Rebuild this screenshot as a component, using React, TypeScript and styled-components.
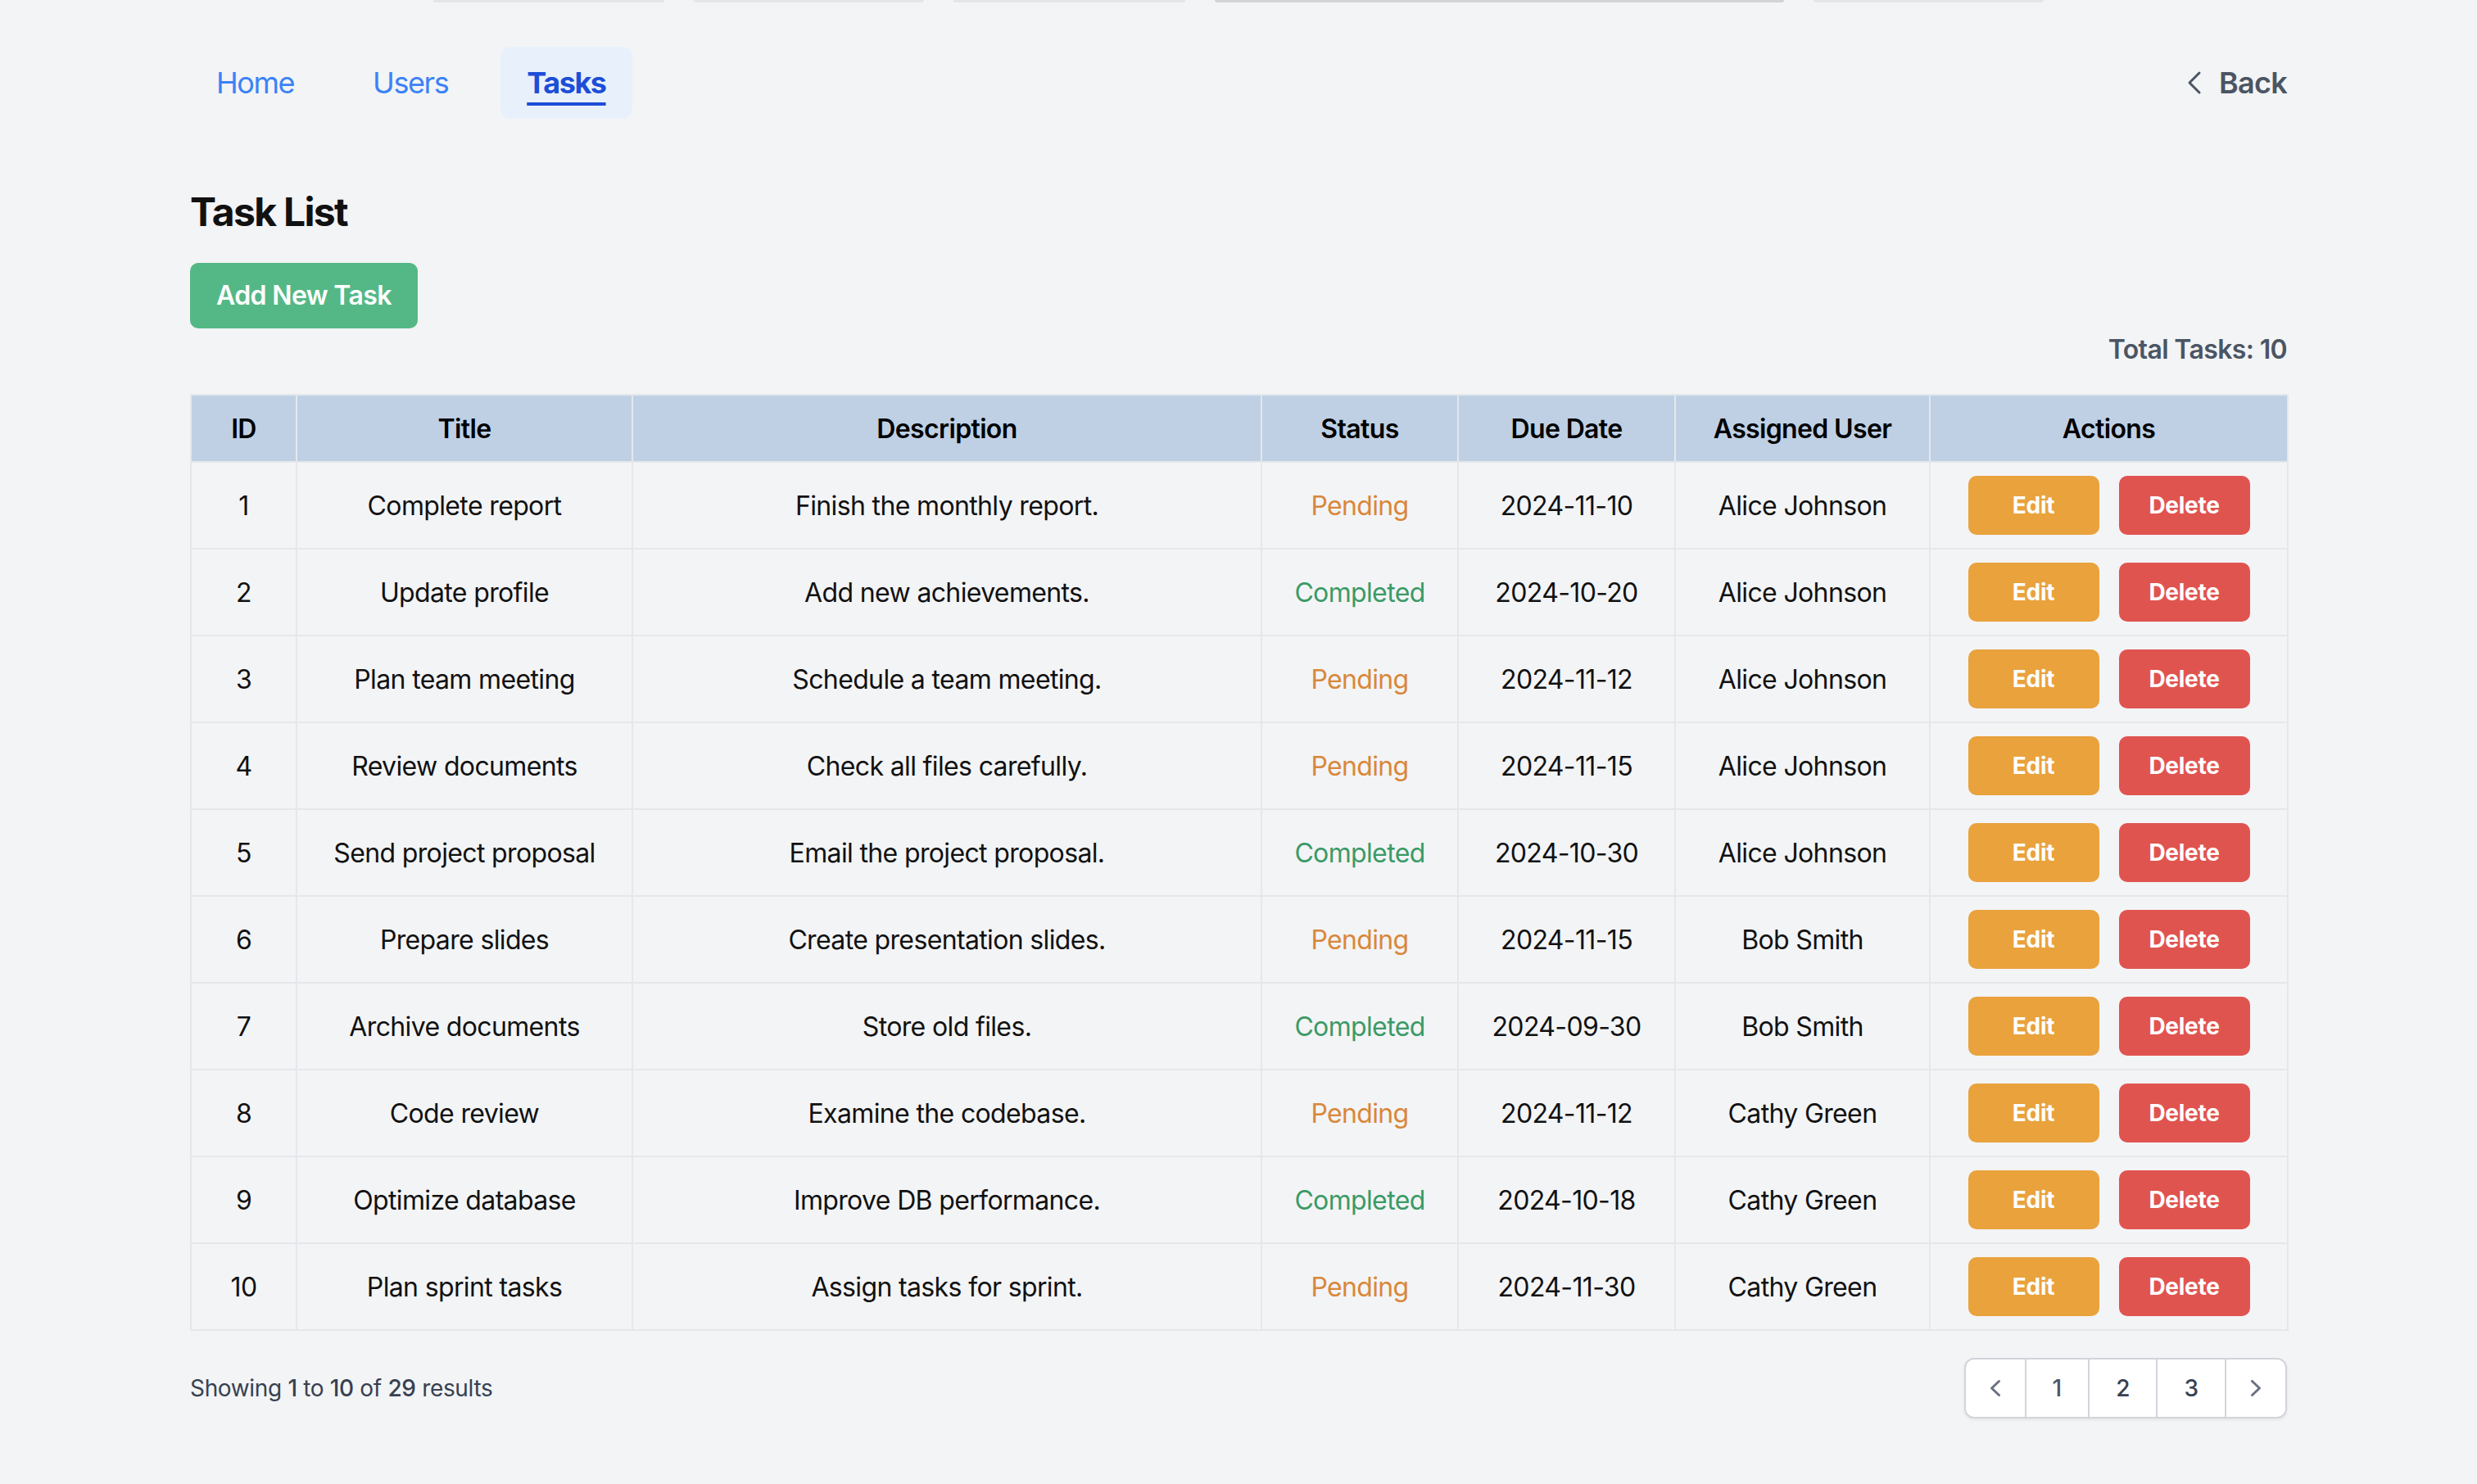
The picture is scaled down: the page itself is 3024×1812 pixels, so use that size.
import React from "react";
import styled, { createGlobalStyle } from "styled-components";
import { ChevronLeft } from "lucide-react";

const GlobalStyle = createGlobalStyle`
  html, body { margin: 0; padding: 0; background: #f3f4f6; }
  body {
    font-family: Inter, "Noto Sans", "Liberation Sans", sans-serif;
    color: #111111;
    -webkit-font-smoothing: antialiased;
  }
  * { box-sizing: border-box; }
`;

const Page = styled.div`
  position: relative;
  min-height: 1812px;
  background: #f3f4f6;
`;

const TopEdge = styled.div`
  position: absolute;
  top: 0;
  left: 529px;
  display: flex;
  gap: 36px;
`;

const EdgeTab = styled.div<{ $w: number; $dark?: boolean }>`
  width: ${(p) => p.$w}px;
  height: 3px;
  border-radius: 0 0 5px 5px;
  background: ${(p) => (p.$dark ? "#d2d3d6" : "#e4e5e8")};
`;

const Container = styled.div`
  width: 2560px;
  margin: 0 auto;
  padding-top: 57px;
`;

const Nav = styled.nav`
  display: flex;
  align-items: center;
  justify-content: space-between;
`;

const NavLinks = styled.div`
  display: flex;
  gap: 32px;
`;

const NavLink = styled.a<{ $active?: boolean }>`
  display: block;
  padding: 16px 32px;
  font-size: 36px;
  line-height: 56px;
  letter-spacing: -0.04em;
  border-radius: 12px;
  cursor: pointer;
  text-decoration: none;
  color: ${(p) => (p.$active ? "#1d4ed8" : "#3b82f6")};
  font-weight: ${(p) => (p.$active ? 700 : 400)};
  background: ${(p) => (p.$active ? "#e8f1fb" : "transparent")};
  ${(p) =>
    p.$active &&
    `
    text-decoration: underline;
    text-decoration-thickness: 4px;
    text-underline-offset: 11px;
    text-decoration-skip-ink: none;
  `}
`;

const BackLink = styled.a`
  display: flex;
  align-items: center;
  gap: 6px;
  font-size: 36px;
  line-height: 56px;
  font-weight: 600;
  letter-spacing: -0.02em;
  color: #4b5563;
  cursor: pointer;
`;

const Title = styled.h1`
  margin: 82px 0 30px;
  font-size: 48px;
  line-height: 64px;
  font-weight: 700;
  letter-spacing: -0.035em;
  color: #111111;
`;

const AddButton = styled.button`
  display: block;
  height: 80px;
  padding: 0 32px;
  border: none;
  border-radius: 10px;
  background: #54b886;
  color: #ffffff;
  font-family: inherit;
  font-size: 32px;
  font-weight: 600;
  line-height: 48px;
  letter-spacing: -0.02em;
  cursor: pointer;
`;

const TotalRow = styled.div`
  text-align: right;
  font-size: 32px;
  line-height: 48px;
  font-weight: 600;
  letter-spacing: -0.02em;
  color: #4b5563;
  margin-top: 2px;
  margin-bottom: 30px;
`;

const Table = styled.table`
  width: 100%;
  table-layout: fixed;
  border-collapse: collapse;
  border: 2px solid #e5e7eb;
`;

const HeadCell = styled.th`
  background: #bfd0e5;
  border: 2px solid #e5e7eb;
  padding: 17px 8px 15px;
  font-size: 32px;
  line-height: 48px;
  font-weight: 600;
  letter-spacing: -0.02em;
  color: #000000;
  text-align: center;
`;

const Cell = styled.td`
  border: 2px solid #e5e7eb;
  padding: 16px 8px;
  height: 106px;
  font-size: 32px;
  line-height: 48px;
  letter-spacing: -0.02em;
  color: #111111;
  text-align: center;
  white-space: nowrap;
`;

const CellText = styled.span`
  position: relative;
  top: 1px;
`;

const StatusText = styled(CellText)<{ $done: boolean }>`
  color: ${(p) => (p.$done ? "#3b9a66" : "#d9873a")};
`;

const Actions = styled.div`
  display: flex;
  justify-content: center;
  gap: 24px;
`;

const ActionButton = styled.button<{ $kind: "edit" | "delete" }>`
  width: 160px;
  height: 72px;
  border: none;
  border-radius: 10px;
  background: ${(p) => (p.$kind === "edit" ? "#e9a23c" : "#e05450")};
  color: #ffffff;
  font-family: inherit;
  font-size: 28px;
  font-weight: 700;
  letter-spacing: -0.01em;
  cursor: pointer;
`;

const Footer = styled.div`
  margin-top: 33px;
  display: flex;
  align-items: center;
  justify-content: space-between;
`;

const Showing = styled.p`
  margin: 0;
  font-size: 28px;
  line-height: 40px;
  letter-spacing: -0.012em;
  color: #374151;
`;

const Strong = styled.span`
  font-weight: 500;
`;

const Pager = styled.nav`
  display: inline-flex;
  border: 2px solid #d1d5db;
  border-radius: 12px;
  background: #ffffff;
  box-shadow: 0 2px 4px rgba(0, 0, 0, 0.06);
  overflow: hidden;
`;

const PageItem = styled.a<{ $arrow?: boolean; $muted?: boolean }>`
  display: flex;
  align-items: center;
  justify-content: center;
  height: 70px;
  padding: 0 ${(p) => (p.$arrow ? 16 : 32)}px;
  font-size: 28px;
  line-height: 40px;
  font-weight: 500;
  color: ${(p) => (p.$arrow ? "#6b7280" : p.$muted ? "#4b5563" : "#374151")};
  cursor: pointer;
  & + & {
    border-left: 2px solid #d1d5db;
  }
`;

const ArrowIcon = ({ dir }: { dir: "left" | "right" }) => (
  <svg width="40" height="40" viewBox="0 0 20 20" fill="currentColor" aria-hidden>
    {dir === "left" ? (
      <path
        fillRule="evenodd"
        d="M12.79 5.23a.75.75 0 01-.02 1.06L8.832 10l3.938 3.71a.75.75 0 11-1.04 1.08l-4.5-4.25a.75.75 0 010-1.08l4.5-4.25a.75.75 0 011.06.02z"
        clipRule="evenodd"
      />
    ) : (
      <path
        fillRule="evenodd"
        d="M7.21 14.77a.75.75 0 01.02-1.06L11.168 10 7.23 6.29a.75.75 0 111.04-1.08l4.5 4.25a.75.75 0 010 1.080l-4.5 4.25a.75.75 0 01-1.06-.02z"
        clipRule="evenodd"
      />
    )}
  </svg>
);

type Task = {
  id: number;
  title: string;
  description: string;
  done: boolean;
  due: string;
  user: string;
};

const tasks: Task[] = [
  { id: 1, title: "Complete report", description: "Finish the monthly report.", done: false, due: "2024-11-10", user: "Alice Johnson" },
  { id: 2, title: "Update profile", description: "Add new achievements.", done: true, due: "2024-10-20", user: "Alice Johnson" },
  { id: 3, title: "Plan team meeting", description: "Schedule a team meeting.", done: false, due: "2024-11-12", user: "Alice Johnson" },
  { id: 4, title: "Review documents", description: "Check all files carefully.", done: false, due: "2024-11-15", user: "Alice Johnson" },
  { id: 5, title: "Send project proposal", description: "Email the project proposal.", done: true, due: "2024-10-30", user: "Alice Johnson" },
  { id: 6, title: "Prepare slides", description: "Create presentation slides.", done: false, due: "2024-11-15", user: "Bob Smith" },
  { id: 7, title: "Archive documents", description: "Store old files.", done: true, due: "2024-09-30", user: "Bob Smith" },
  { id: 8, title: "Code review", description: "Examine the codebase.", done: false, due: "2024-11-12", user: "Cathy Green" },
  { id: 9, title: "Optimize database", description: "Improve DB performance.", done: true, due: "2024-10-18", user: "Cathy Green" },
  { id: 10, title: "Plan sprint tasks", description: "Assign tasks for sprint.", done: false, due: "2024-11-30", user: "Cathy Green" },
];

const columns: { label: string; width: number }[] = [
  { label: "ID", width: 129 },
  { label: "Title", width: 410 },
  { label: "Description", width: 768 },
  { label: "Status", width: 240 },
  { label: "Due Date", width: 265 },
  { label: "Assigned User", width: 311 },
  { label: "Actions", width: 437 },
];

const edgeTabs = [
  { w: 282 },
  { w: 281 },
  { w: 283 },
  { w: 695, dark: true },
  { w: 281 },
];

export default function App() {
  return (
    <Page>
      <GlobalStyle />
      <TopEdge>
        {edgeTabs.map((t, i) => (
          <EdgeTab key={i} $w={t.w} $dark={t.dark} />
        ))}
      </TopEdge>
      <Container>
        <Nav>
          <NavLinks>
            <NavLink>Home</NavLink>
            <NavLink>Users</NavLink>
            <NavLink $active>Tasks</NavLink>
          </NavLinks>
          <BackLink>
            <ChevronLeft size={48} strokeWidth={1.5} />
            Back
          </BackLink>
        </Nav>

        <Title>Task List</Title>
        <AddButton>Add New Task</AddButton>
        <TotalRow>Total Tasks: 10</TotalRow>

        <Table>
          <colgroup>
            {columns.map((c) => (
              <col key={c.label} style={{ width: c.width }} />
            ))}
          </colgroup>
          <thead>
            <tr>
              {columns.map((c) => (
                <HeadCell key={c.label}>{c.label}</HeadCell>
              ))}
            </tr>
          </thead>
          <tbody>
            {tasks.map((t) => (
              <tr key={t.id}>
                <Cell><CellText>{t.id}</CellText></Cell>
                <Cell><CellText>{t.title}</CellText></Cell>
                <Cell><CellText>{t.description}</CellText></Cell>
                <Cell>
                  <StatusText $done={t.done}>{t.done ? "Completed" : "Pending"}</StatusText>
                </Cell>
                <Cell><CellText>{t.due}</CellText></Cell>
                <Cell><CellText>{t.user}</CellText></Cell>
                <Cell>
                  <Actions>
                    <ActionButton $kind="edit">Edit</ActionButton>
                    <ActionButton $kind="delete">Delete</ActionButton>
                  </Actions>
                </Cell>
              </tr>
            ))}
          </tbody>
        </Table>

        <Footer>
          <Showing>
            Showing <Strong>1</Strong> to <Strong>10</Strong> of <Strong>29</Strong> results
          </Showing>
          <Pager>
            <PageItem $arrow>
              <ArrowIcon dir="left" />
            </PageItem>
            <PageItem $muted>1</PageItem>
            <PageItem>2</PageItem>
            <PageItem>3</PageItem>
            <PageItem $arrow>
              <ArrowIcon dir="right" />
            </PageItem>
          </Pager>
        </Footer>
      </Container>
    </Page>
  );
}
